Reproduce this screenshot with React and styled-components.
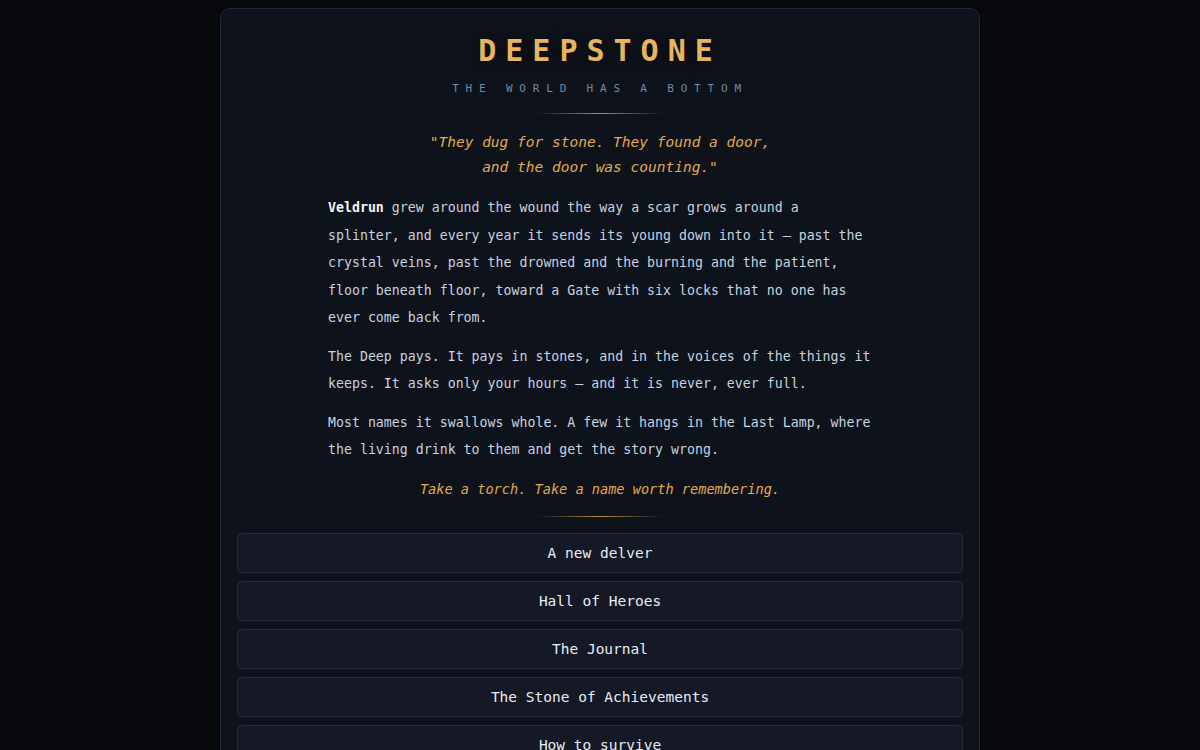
import React from 'react';
import styled, { createGlobalStyle } from 'styled-components';

const GlobalStyle = createGlobalStyle`
  * { box-sizing: border-box; }
  html, body {
    margin: 0;
    background: #06080b;
    font-family: "DejaVu Sans Mono", "Liberation Mono", monospace;
  }
`;

const Page = styled.main`
  min-height: 100vh;
  padding-top: 8px;
`;

const Card = styled.section`
  width: 760px;
  margin: 0 auto;
  padding: 24px 16px 24px;
  background: #0e121a;
  border: 1px solid #1f2634;
  border-radius: 10px;
  display: flex;
  flex-direction: column;
  align-items: center;
`;

const Title = styled.h1`
  margin: 0;
  font-size: 30px;
  line-height: 36px;
  font-weight: bold;
  letter-spacing: 0.3em;
  color: #e8b45e;
  text-shadow: 0 2px 14px rgba(0, 0, 0, 0.7);
`;

const Tagline = styled.div`
  margin-top: 12px;
  font-size: 11px;
  line-height: 15px;
  letter-spacing: 0.62em;
  color: #6f8ba6;
`;

const Rule = styled.div`
  width: 128px;
  height: 1px;
  margin: ${p => p.$m};
  background: linear-gradient(to right, rgba(232, 180, 94, 0), rgba(232, 180, 94, 0.75), rgba(232, 180, 94, 0));
`;

const Quote = styled.blockquote`
  margin: 0;
  font-size: 14.5px;
  line-height: 25px;
  font-style: italic;
  color: #e2aa4f;
  text-align: center;
`;

const Story = styled.div`
  width: 544px;
  margin-top: 14px;
  display: flex;
  flex-direction: column;
  gap: 11px;
`;

const Para = styled.p`
  margin: 0;
  font-size: 13.25px;
  line-height: 27.5px;
  color: #c6d3e0;

  strong {
    color: #f3f6fa;
    font-weight: bold;
  }
`;

const Closer = styled.p`
  margin: 14px 0 0;
  font-size: 13.6px;
  line-height: 22px;
  font-style: italic;
  color: #e2aa4f;
  text-align: center;
`;

const Menu = styled.nav`
  align-self: stretch;
  display: flex;
  flex-direction: column;
  gap: 8px;
`;

const MenuButton = styled.button`
  height: 40px;
  width: 100%;
  background: #141925;
  border: 1px solid #242c3a;
  border-radius: 4px;
  color: #e6edf4;
  font-family: "DejaVu Sans Mono", "Liberation Mono", monospace;
  font-size: 14.5px;
  cursor: pointer;

  &:hover {
    background: #181e2b;
  }
`;

const items = [
  'A new delver',
  'Hall of Heroes',
  'The Journal',
  'The Stone of Achievements',
  'How to survive',
];

export default function App() {
  return (
    <Page>
      <GlobalStyle />
      <Card>
        <Title>DEEPSTONE</Title>
        <Tagline>THE WORLD HAS A BOTTOM</Tagline>
        <Rule $m="17px 0 16px" />
        <Quote>
          "They dug for stone. They found a door,
          <br />
          and the door was counting."
        </Quote>
        <Story>
          <Para>
            <strong>Veldrun</strong> grew around the wound the way a scar grows around a
            splinter, and every year it sends its young down into it — past the crystal
            veins, past the drowned and the burning and the patient, floor beneath floor,
            toward a Gate with six locks that no one has ever come back from.
          </Para>
          <Para>
            The Deep pays. It pays in stones, and in the voices of the things it keeps.
            It asks only your hours — and it is never, ever full.
          </Para>
          <Para>
            Most names it swallows whole. A few it hangs in the Last Lamp, where the
            living drink to them and get the story wrong.
          </Para>
        </Story>
        <Closer>Take a torch. Take a name worth remembering.</Closer>
        <Rule $m="16px 0 16px" />
        <Menu>
          {items.map(label => (
            <MenuButton key={label}>{label}</MenuButton>
          ))}
        </Menu>
      </Card>
    </Page>
  );
}
